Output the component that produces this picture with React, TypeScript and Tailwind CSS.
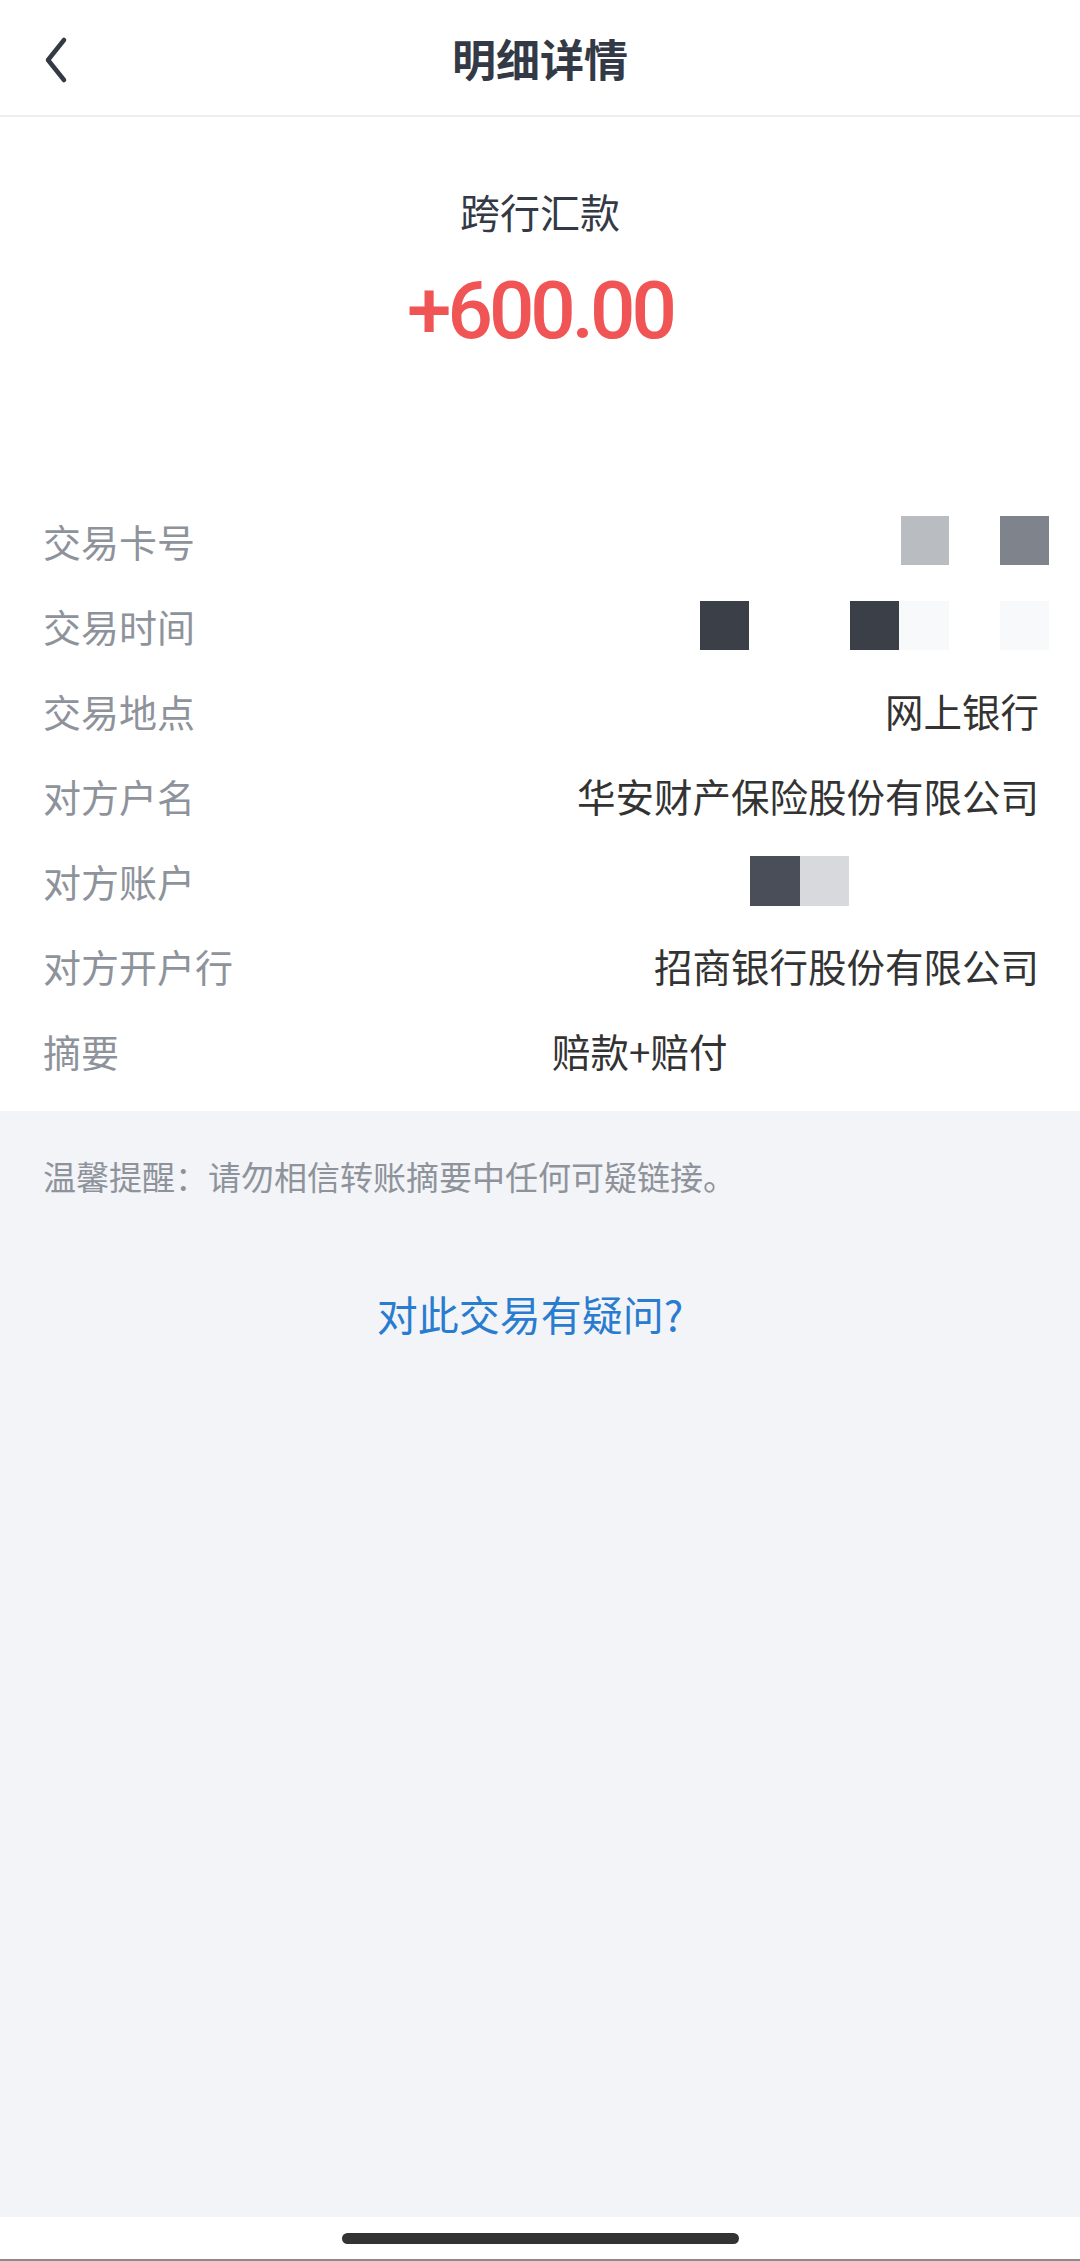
const cjk = { fontFamily: '"Noto Sans CJK SC", "Noto Sans", sans-serif' };

function Row({ label, children }: { label: string; children?: React.ReactNode }) {
  return (
    <div className="flex h-[85px] items-center pl-[43px] pr-[41px]">
      <span className="shrink-0 text-[38px] text-[#8e939b]">{label}</span>
      {children}
    </div>
  );
}

function Value({ text }: { text: string }) {
  return <span className="ml-auto text-[38.5px] text-[#333333]">{text}</span>;
}

export default function App() {
  return (
    <div className="flex h-[2261px] w-[1080px] flex-col bg-white" style={cjk}>
      <header className="relative flex h-[117px] shrink-0 items-center justify-center border-b-2 border-[#eeeeee]">
        <button className="absolute left-[36px] top-[32px] p-1">
          <svg width="34" height="48" viewBox="0 0 34 48" fill="none">
            <path d="M24 4 L8 24 L24 44" stroke="#333a45" strokeWidth="4.5" strokeLinecap="round" strokeLinejoin="round" />
          </svg>
        </button>
        <h1 className="text-[44px] font-bold leading-none text-[#333a45]">明细详情</h1>
      </header>

      <section className="bg-white pt-[70px] pb-[18px]">
        <div className="text-center text-[40px] leading-[48px] text-[#333a45]">跨行汇款</div>
        <div
          className="mt-[31px] text-center text-[80px] font-medium leading-[90px] tracking-[-4px] text-[#f05454]"
          style={{ fontFamily: 'Roboto, "Noto Sans", sans-serif' }}
        >
          +600.00
        </div>

        <div className="mt-[142px]">
          <Row label="交易卡号">
            <div className="-mr-[10px] ml-auto flex h-[49px]">
              <div className="w-[48px] bg-[#b9bcc0]" />
              <div className="w-[51px]" />
              <div className="w-[49px] bg-[#7f838b]" />
            </div>
          </Row>
          <Row label="交易时间">
            <div className="-mr-[10px] ml-auto flex h-[49px]">
              <div className="w-[49px] bg-[#3a3f48]" />
              <div className="w-[101px]" />
              <div className="w-[49px] bg-[#3a3f48]" />
              <div className="w-[50px] bg-[#f8f9fb]" />
              <div className="w-[51px]" />
              <div className="w-[49px] bg-[#f8f9fb]" />
            </div>
          </Row>
          <Row label="交易地点">
            <Value text="网上银行" />
          </Row>
          <Row label="对方户名">
            <Value text="华安财产保险股份有限公司" />
          </Row>
          <Row label="对方账户">
            <div className="ml-[555px] flex h-[50px]">
              <div className="w-[50px] bg-[#4a4e58]" />
              <div className="w-[49px] bg-[#d8d9dc]" />
            </div>
          </Row>
          <Row label="对方开户行">
            <Value text="招商银行股份有限公司" />
          </Row>
          <Row label="摘要">
            <span className="ml-[433px] text-[38.5px] text-[#333333]">赔款+赔付</span>
          </Row>
        </div>
      </section>

      <section className="flex-1 bg-[#f3f4f7] px-[43px] pt-[45px]">
        <p className="text-[33px] leading-[40px] text-[#8e939b]">温馨提醒：请勿相信转账摘要中任何可疑链接。</p>
        <div className="mt-[92px] pr-[20px] text-center">
          <a className="text-[41px] leading-[50px] text-[#2a7cd0]">对此交易有疑问?</a>
        </div>
      </section>

      <footer className="flex h-[44px] shrink-0 items-center justify-center border-b-2 border-[#8a8a8a] bg-white">
        <div className="h-[11px] w-[397px] rounded-full bg-[#333333]" />
      </footer>
    </div>
  );
}
